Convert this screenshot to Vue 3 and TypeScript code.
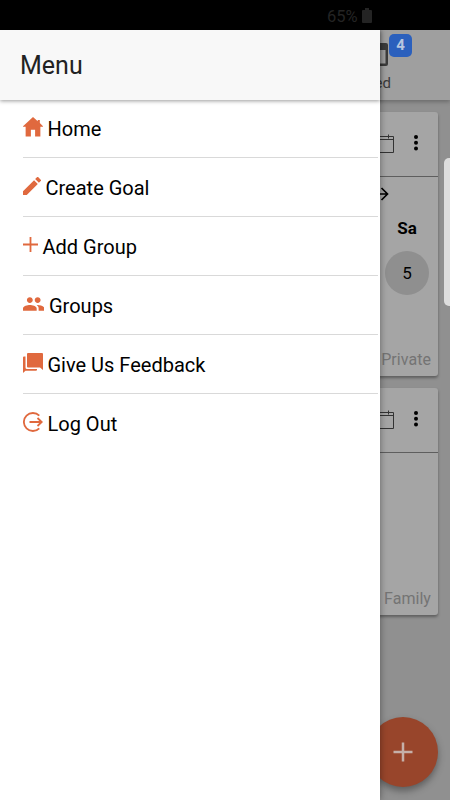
<script setup lang="ts">
interface MenuItem {
  label: string
  icon: string
}

interface GoalCard {
  id: number
  visibility: string
  kind: string
  day?: string
  date?: number
}

const items: MenuItem[] = [
  { label: 'Home', icon: 'home' },
  { label: 'Create Goal', icon: 'create' },
  { label: 'Add Group', icon: 'add' },
  { label: 'Groups', icon: 'people' },
  { label: 'Give Us Feedback', icon: 'feedback' },
  { label: 'Log Out', icon: 'logout' },
]

const cards: GoalCard[] = [
  { id: 1, visibility: 'Private', kind: 'week', day: 'Sa', date: 5 },
  { id: 2, visibility: 'Family', kind: 'empty' },
]
</script>

<template>
  <div class="screen">
    <div class="status">
      <span>65%</span>
      <svg class="battery" viewBox="0 0 10 15"><path d="M3 0h4v2h2q1 0 1 1v11q0 1-1 1H1q-1 0-1-1V3q0-1 1-1h2z" /></svg>
    </div>

    <main class="page">
      <header class="tabs">
        <div class="tab">
          <svg class="tab-icon" viewBox="0 0 22 23"><path fill-rule="evenodd" d="M2 0h18q2 0 2 2v19q0 2-2 2H2q-2 0-2-2V2Q0 0 2 0zM2.500 7v13.500h17V7z" /></svg>
          <span class="tab-label">Completed</span>
          <span class="badge">4</span>
        </div>
      </header>

      <section v-for="card in cards" :key="card.id" class="card" :class="card.kind">
        <div class="card-head">
          <svg class="calendar" viewBox="0 0 26 19"><path d="M.5 2.500h25v16H.5zM.5 5.500h25M6 .5v4M20.500 .5v4" /></svg>
          <svg class="dots" viewBox="0 0 4 16"><circle cx="2" cy="2" r="2" /><circle cx="2" cy="7.700" r="2" /><circle cx="2" cy="13.400" r="2" /></svg>
        </div>
        <div class="card-body">
          <template v-if="card.day">
            <svg class="next" viewBox="0 0 16 14"><path d="M0 7h14M8.500 1l6 6-6 6" /></svg>
            <div class="day">
              <b>{{ card.day }}</b>
              <span class="date">{{ card.date }}</span>
            </div>
          </template>
          <span class="visibility">{{ card.visibility }}</span>
        </div>
      </section>

      <button class="fab" aria-label="Add">
        <svg viewBox="0 0 20 20"><path d="M10 .5v19M.5 10h19" /></svg>
      </button>
      <span class="edge-handle"></span>
    </main>

    <aside class="menu">
      <header class="menu-head">Menu</header>
      <nav>
        <a v-for="item in items" :key="item.icon" class="item" :class="item.icon">
          <svg v-if="item.icon === 'home'" class="icon" viewBox="0 0 19 19"><path d="M9.500 0L14 4V2.800h2v3L19 8.700v.6h-2.500V18.500h-5V12h-4v6.500h-5V9.300H0v-.6z" /></svg>
          <svg v-else-if="item.icon === 'create'" class="icon" viewBox="3 3 18 18"><path d="M3 17.250V21h3.750L17.810 9.940l-3.750-3.750L3 17.250zM20.710 7.040a1 1 0 0 0 0-1.410l-2.340-2.340a1 1 0 0 0-1.410 0l-1.830 1.830 3.750 3.750 1.830-1.830z" /></svg>
          <svg v-else-if="item.icon === 'add'" class="icon line" viewBox="0 0 15 15"><path d="M7.500 0v15M0 7.500h15" /></svg>
          <svg v-else-if="item.icon === 'people'" class="icon" viewBox="1 5 22 14"><path d="M16 11c1.660 0 2.990-1.340 2.990-3S17.660 5 16 5s-3 1.340-3 3 1.340 3 3 3zm-8 0c1.660 0 2.990-1.340 2.990-3S9.660 5 8 5 5 6.340 5 8s1.340 3 3 3zm0 2c-2.330 0-7 1.170-7 3.500V19h14v-2.500c0-2.330-4.670-3.500-7-3.500zm8 0c-.29 0-.62.020-.97.050 1.160.84 1.970 1.970 1.970 3.450V19h6v-2.500c0-2.330-4.670-3.500-7-3.500z" /></svg>
          <svg v-else-if="item.icon === 'feedback'" class="icon" viewBox="0 0 20 20"><path d="M5 0h14q1 0 1 1v16L17 14.500H5q-1 0-1-1V1q0-1 1-1z" /><path d="M1 3.500h1.500V14.500q0 1.500 1.500 1.500h10v.7q0 1-1 1H2.500L0 20V4.500q0-1 1-1z" /></svg>
          <svg v-else class="icon line" viewBox="0 0 20 20"><path d="M16.300 3.700A9 9 0 1 0 16.300 16.300M6.500 10h12M14.500 6l4.200 4-4.200 4" /></svg>
          <span>{{ item.label }}</span>
        </a>
      </nav>
    </aside>
  </div>
</template>

<style>
body {
  margin: 0;
  overflow: hidden;
}
</style>

<style scoped>
.screen {
  position: relative;
  width: 450px;
  height: 800px;
  overflow: hidden;
  font-family: Roboto, sans-serif;
  background: #909090;
}
.status {
  box-sizing: border-box;
  height: 30px;
  padding: 2px 0 0 327px;
  display: flex;
  align-items: center;
  gap: 4px;
  background: #000;
  color: #242424;
  font-size: 16.500px;
}
.battery {
  width: 10px;
  height: 15px;
  margin-top: -2px;
  fill: #242424;
}
.page {
  height: 770px;
}
.tabs {
  height: 70px;
  display: flex;
  justify-content: flex-end;
  background: #9f9f9f;
  box-shadow: 0 2px 4px rgba(0, 0, 0, 0.25);
}
.tab {
  position: relative;
  width: 150px;
  display: flex;
  flex-direction: column;
  align-items: center;
  padding-top: 13px;
}
.tab-icon {
  width: 24px;
  height: 23px;
  margin-left: 3px;
  fill: #3b3b3b;
}
.tab-label {
  margin: 8px 0 0 -42px;
  width: 74px;
  text-align: right;
  font-size: 15px;
  line-height: 18px;
  color: #3b3b3b;
}
.badge {
  position: absolute;
  top: 4px;
  left: 89px;
  width: 23px;
  height: 23px;
  border-radius: 5px;
  background: #2b60bd;
  color: #b7c6df;
  font-size: 15px;
  font-weight: 700;
  line-height: 23px;
  text-align: center;
}
.card {
  display: flex;
  flex-direction: column;
  margin: 12px;
  border-radius: 3px;
  background: #a5a5a5;
  box-shadow: 0 2px 3px rgba(0, 0, 0, 0.35);
}
.card.week {
  height: 264px;
}
.card.empty {
  height: 227px;
}
.card-head {
  box-sizing: border-box;
  height: 65px;
  display: flex;
  align-items: center;
  justify-content: flex-end;
  gap: 19.500px;
  padding: 0 20.500px 2px 0;
  border-bottom: 1px solid #5e5e5e;
}
.calendar {
  width: 26px;
  height: 19px;
  fill: none;
  stroke: #333;
}
.dots {
  width: 4px;
  height: 16px;
  fill: #000;
}
.card-body {
  flex: 1;
  display: flex;
  flex-direction: column;
  align-items: flex-end;
}
.next {
  width: 16px;
  height: 14px;
  margin: 10px 49px 0 0;
  fill: none;
  stroke: #000;
  stroke-width: 1.700;
}
.day {
  width: 44px;
  margin: 17px 9px 0 0;
  display: flex;
  flex-direction: column;
  align-items: center;
  gap: 13px;
  font-size: 17px;
  line-height: 20px;
}
.date {
  width: 44px;
  height: 44px;
  border-radius: 50%;
  background: #8f8f8f;
  line-height: 44px;
  text-align: center;
}
.visibility {
  margin: auto 7px 6px 0;
  font-size: 16px;
  line-height: 20px;
  letter-spacing: 0.050px;
  color: #747474;
}
.fab {
  position: absolute;
  right: 12.500px;
  bottom: 13px;
  width: 70px;
  height: 70px;
  display: grid;
  place-items: center;
  padding: 0;
  border: 0;
  border-radius: 50%;
  background: #98452b;
  box-shadow: 0 4px 7px rgba(0, 0, 0, 0.35);
}
.fab svg {
  width: 20px;
  height: 20px;
  stroke: #c5b0a9;
  stroke-width: 2.500;
}
.edge-handle {
  position: absolute;
  right: -4px;
  top: 158px;
  width: 10px;
  height: 148px;
  border-radius: 5px;
  background: #dedede;
}
.menu {
  position: absolute;
  top: 30px;
  left: 0;
  width: 380px;
  height: 770px;
  background: #fff;
  box-shadow: 0 0 7px rgba(0, 0, 0, 0.4);
  clip-path: inset(0 -12px 0 0);
}
.menu-head {
  box-sizing: border-box;
  height: 70px;
  padding-left: 20px;
  background: #f8f8f8;
  box-shadow: 0 1px 4px rgba(0, 0, 0, 0.4);
  color: #222;
  font-size: 25px;
  line-height: 71px;
}
nav {
  display: flex;
  flex-direction: column;
  padding: 0 2px 0 22.500px;
  margin-top: -1px;
}
.item {
  box-sizing: border-box;
  height: 59.100px;
  display: flex;
  align-items: center;
  gap: 5px;
  padding-top: 1.500px;
  border-bottom: 1px solid #d9d9d9;
  color: #000;
  font-size: 20px;
  line-height: 24px;
}
.item:last-child {
  border-bottom-color: transparent;
}
.icon {
  width: 20px;
  height: 20px;
  margin-top: -4px;
  fill: #e0693e;
}
.icon.line {
  fill: none;
  stroke: #e0693e;
  stroke-width: 1.800;
}
.create .icon {
  width: 18px;
  height: 18px;
}
.add .icon {
  width: 15px;
  height: 15px;
}
.people .icon {
  width: 21.500px;
  height: 14px;
}
</style>
